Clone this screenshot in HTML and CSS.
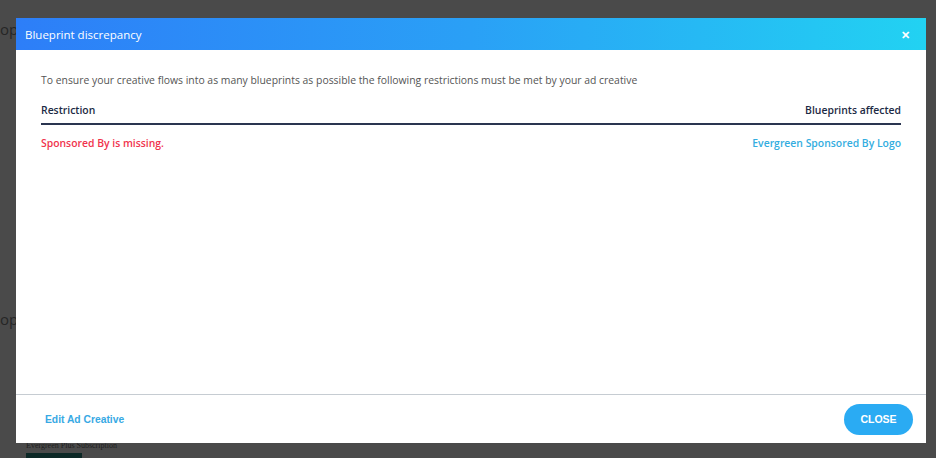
FILE: index.html
```html
<!DOCTYPE html>
<html lang="en">
<head>
    <meta charset="UTF-8">
    <title>Blueprint discrepancy</title>
    <link rel="stylesheet" href="styles.css">
</head>
<body>
    <div class="page">
        <p class="page-text first">op</p>
        <p class="page-text second">op</p>
        <p class="page-caption">Evergreen Plus Subscription</p>
        <div class="page-block"></div>
    </div>

    <div class="modal">
        <div class="modal-header">
            <span class="modal-title">Blueprint discrepancy</span>
            <span class="modal-close">&#10005;</span>
        </div>
        <div class="modal-body">
            <p class="intro">To ensure your creative flows into as many blueprints as possible the following restrictions must be met by your ad creative</p>
            <div class="table-head">
                <span>Restriction</span>
                <span>Blueprints affected</span>
            </div>
            <div class="table-row">
                <span class="missing">Sponsored By is missing.</span>
                <span class="affected">Evergreen Sponsored By Logo</span>
            </div>
        </div>
        <div class="modal-footer">
            <a class="edit-link">Edit Ad Creative</a>
            <button class="close-btn">CLOSE</button>
        </div>
    </div>
</body>
</html>
```
FILE: styles.css
```css
* {
    margin: 0;
    padding: 0;
    box-sizing: border-box;
}

html, body {
    width: 100%;
    height: 100%;
    overflow: hidden;
}

body {
    background: #4a4a4a;
    font-family: "Open Sans", "Liberation Sans", sans-serif;
    position: relative;
}

.page {
    display: flex;
    flex-direction: column;
    height: 100%;
}

.page-text {
    color: #262626;
    font-size: 15px;
    line-height: 20px;
}

.page-text.first {
    margin-top: 19px;
}

.page-text.second {
    margin-top: 270px;
}

.page-caption {
    margin-top: 112px;
    margin-left: 26px;
    font-family: "Liberation Serif", serif;
    font-size: 8px;
    line-height: 10px;
    color: #1e1e1e;
}

.page-block {
    margin-top: 2px;
    margin-left: 26px;
    width: 56px;
    height: 10px;
    flex-shrink: 0;
    background: #0c2826;
}

.modal {
    position: absolute;
    left: 16px;
    top: 18px;
    width: 910px;
    height: 425px;
    background: #fff;
    display: flex;
    flex-direction: column;
}

.modal-header {
    height: 32px;
    flex-shrink: 0;
    display: flex;
    align-items: center;
    justify-content: space-between;
    padding: 0 16px 0 9px;
    background: linear-gradient(90deg, #2d7ef8 0%, #2aa0f6 50%, #22d2f2 100%);
    color: #fff;
}

.modal-title {
    font-size: 11.5px;
}

.modal-close {
    font-size: 11px;
    font-weight: bold;
}

.modal-body {
    flex: 1;
    padding: 22px 25px 0 25px;
    font-size: 10.4px;
}

.intro {
    color: #555;
    line-height: 16px;
}

.table-head {
    display: flex;
    justify-content: space-between;
    margin-top: 14px;
    padding-bottom: 5px;
    line-height: 16px;
    font-weight: 600;
    color: #1c2a44;
    border-bottom: 2px solid #2a3550;
}

.table-row {
    display: flex;
    justify-content: space-between;
    margin-top: 10px;
    line-height: 16px;
    font-weight: 600;
}

.missing {
    color: #f0334d;
}

.affected {
    color: #33ade0;
}

.modal-footer {
    height: 49px;
    flex-shrink: 0;
    border-top: 1px solid #c6ccd2;
    display: flex;
    align-items: center;
    justify-content: space-between;
    padding: 0 13px 0 29px;
}

.edit-link {
    font-family: "Liberation Sans", Arial, sans-serif;
    font-size: 10.3px;
    font-weight: bold;
    color: #38a9e4;
}

.close-btn {
    width: 69px;
    height: 31px;
    border: none;
    border-radius: 16px;
    background: #2aabf3;
    color: #fff;
    font-family: "Liberation Sans", Arial, sans-serif;
    font-size: 10.5px;
    font-weight: bold;
}
```
